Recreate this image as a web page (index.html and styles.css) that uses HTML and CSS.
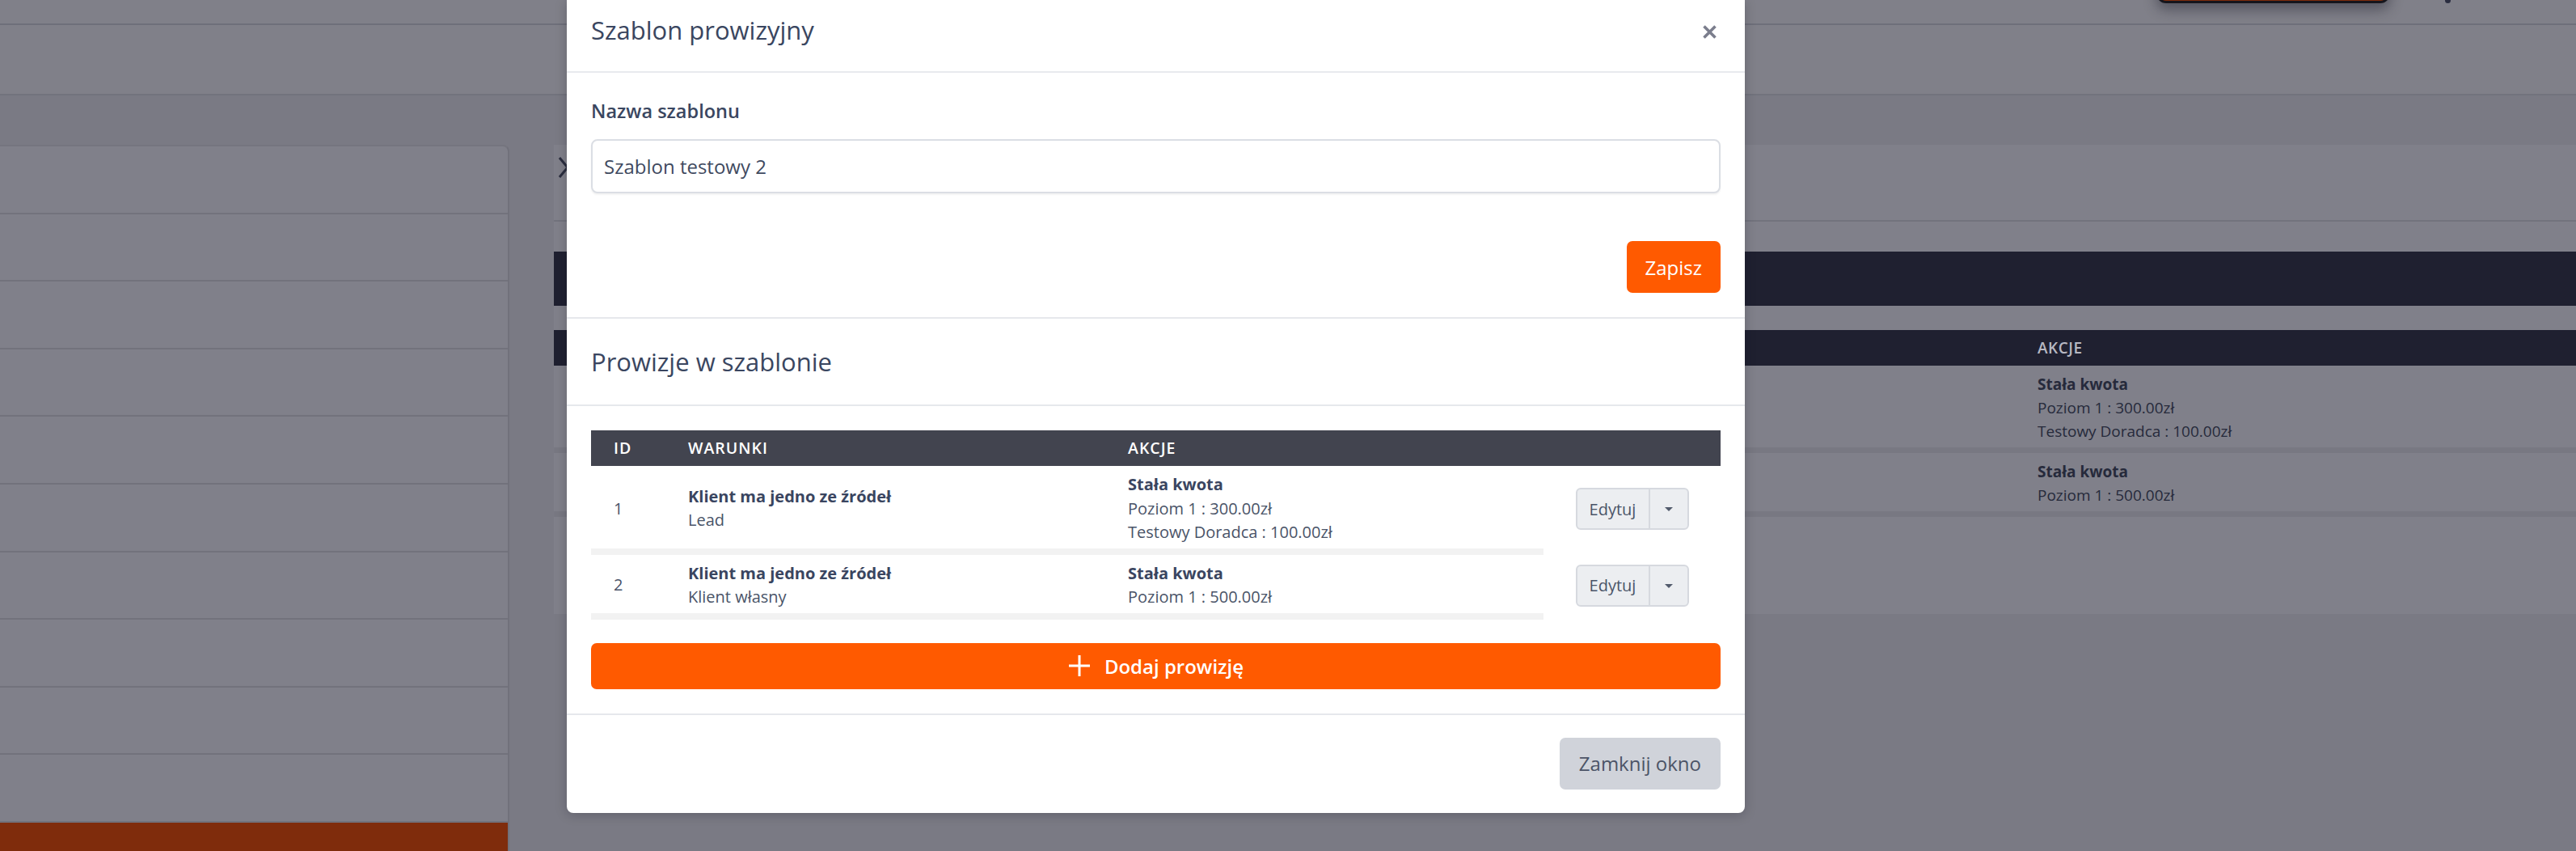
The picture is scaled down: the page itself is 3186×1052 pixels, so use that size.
FILE: index.html
```html
<!DOCTYPE html>
<html lang="pl">
<head>
<meta charset="utf-8">
<title>Szablon prowizyjny</title>
<link rel="stylesheet" href="styles.css">
</head>
<body>
<div class="page">
  <header class="topbar">
    <div class="top-btn"></div>
    <div class="top-dot"></div>
  </header>
  <div class="subbar"></div>
  <div class="content">
    <aside class="side-card">
      <div class="side-row"></div>
      <div class="side-row"></div>
      <div class="side-row"></div>
      <div class="side-row"></div>
      <div class="side-row"></div>
      <div class="side-row"></div>
      <div class="side-row"></div>
      <div class="side-row"></div>
      <div class="side-row"></div>
      <div class="side-row"></div>
      <div class="side-foot"></div>
    </aside>
    <main class="main-card">
      <div class="main-head">
        <svg class="main-x" width="26" height="30" viewBox="0 0 26 30"><path d="M3 3 L23 27 M23 3 L3 27" stroke="#2a2d3e" stroke-width="3" fill="none"/></svg>
      </div>
      <div class="main-bar"></div>
      <table class="bg-table">
        <thead>
          <tr><th class="bg-first"></th><th>Akcje</th></tr>
        </thead>
        <tbody>
          <tr><td></td><td><div class="bg-strong">Stała kwota</div><div>Poziom 1 : 300.00zł</div><div>Testowy Doradca : 100.00zł</div></td></tr>
          <tr><td></td><td><div class="bg-strong">Stała kwota</div><div>Poziom 1 : 500.00zł</div></td></tr>
        </tbody>
      </table>
    </main>
  </div>
</div>

<div class="modal">
  <div class="modal-header">
    <h2 class="modal-title">Szablon prowizyjny</h2>
    <button class="close-btn" type="button" aria-label="Zamknij">
      <svg width="19" height="17" viewBox="0 0 19 17"><path d="M2.5 1.5 L16.5 15.5 M16.5 1.5 L2.5 15.5" stroke="#7b7e8d" stroke-width="3.6" fill="none"/></svg>
    </button>
  </div>
  <div class="modal-body">
    <label class="field-label" for="name">Nazwa szablonu</label>
    <input class="text-input" id="name" type="text" value="Szablon testowy 2">
    <div class="actions-right">
      <button class="btn btn-orange" type="button">Zapisz</button>
    </div>
  </div>
  <section class="section">
    <div class="section-head">
      <h3 class="section-title">Prowizje w szablonie</h3>
    </div>
    <div class="section-body">
      <table class="comm-table">
        <colgroup>
          <col class="w-id"><col class="w-cond"><col class="w-act"><col class="w-btn">
        </colgroup>
        <thead>
          <tr><th>ID</th><th>Warunki</th><th>Akcje</th><th></th></tr>
        </thead>
        <tbody>
          <tr>
            <td class="c-mid">1</td>
            <td class="c-mid"><div class="strong">Klient ma jedno ze źródeł</div><div>Lead</div></td>
            <td><div class="strong">Stała kwota</div><div>Poziom 1 : 300.00zł</div><div>Testowy Doradca : 100.00zł</div></td>
            <td class="c-btn"><div class="split-btn"><span class="split-main">Edytuj</span><span class="split-caret"><span class="caret"></span></span></div></td>
          </tr>
          <tr>
            <td class="c-mid">2</td>
            <td class="c-mid"><div class="strong">Klient ma jedno ze źródeł</div><div>Klient własny</div></td>
            <td><div class="strong">Stała kwota</div><div>Poziom 1 : 500.00zł</div></td>
            <td class="c-btn"><div class="split-btn"><span class="split-main">Edytuj</span><span class="split-caret"><span class="caret"></span></span></div></td>
          </tr>
        </tbody>
      </table>
      <button class="btn btn-orange btn-block" type="button">
        <svg width="28" height="28" viewBox="0 0 28 28"><path d="M14 1 V27 M1 14 H27" stroke="#fff" stroke-width="3" fill="none"/></svg>
        <span>Dodaj prowizję</span>
      </button>
    </div>
  </section>
  <div class="modal-footer">
    <button class="btn btn-gray" type="button">Zamknij okno</button>
  </div>
</div>
</body>
</html>
```

FILE: styles.css
```css
* { box-sizing: border-box; }

html, body {
  margin: 0;
  padding: 0;
}

body {
  width: 3186px;
  height: 1052px;
  overflow: hidden;
  position: relative;
  background: #7a7a84;
  font-family: "Open Sans", "Noto Sans", "DejaVu Sans", sans-serif;
}

/* ---------- dimmed background page ---------- */
.page {
  height: 1052px;
}

.topbar {
  height: 31px;
  background: #808089;
  border-bottom: 2px solid #6e6f7a;
  display: flex;
  justify-content: flex-end;
  align-items: flex-start;
  gap: 68px;
  padding-right: 155px;
}

.top-btn {
  width: 289px;
  height: 40px;
  margin-top: -36px;
  background: #7f2c0c;
  border: 3px solid #15151c;
  border-radius: 12px;
  box-shadow: 0 8px 16px rgba(30, 30, 45, 0.45);
}

.top-dot {
  width: 7px;
  height: 7px;
  margin-top: -3px;
  border-radius: 50%;
  background: #2a2d40;
}

.subbar {
  height: 87px;
  background: #808089;
  border-bottom: 2px solid #72737d;
}

.content {
  display: flex;
  align-items: flex-start;
  padding-top: 61px;
}

.side-card {
  width: 630px;
  height: 873px;
  background: #80808a;
  border-top: 2px solid #75757f;
  border-right: 2px solid #71717b;
  border-top-right-radius: 8px;
  display: flex;
  flex-direction: column;
}

.side-row {
  height: 83.6px;
  flex: none;
  border-bottom: 2px solid #72727c;
}

.side-foot {
  flex: 1;
  background: #7f2c0c;
}

.main-card {
  flex: 1;
  margin-left: 55px;
  height: 580px;
  background: #80808a;
}

.main-head {
  height: 95px;
  border-bottom: 2px solid #72737d;
  padding: 13px 0 0 4px;
}

.main-x { display: block; }

.main-bar {
  margin-top: 37px;
  height: 67px;
  background: #1f2030;
}

.bg-table {
  margin-top: 30px;
  width: 100%;
  border-spacing: 0;
  font-size: 19px;
  line-height: 29px;
  color: #262a3b;
}

.bg-table th {
  height: 44px;
  background: #1f2030;
  color: #b7b8c2;
  font-weight: 600;
  text-transform: uppercase;
  text-align: left;
  padding: 0 28px;
  letter-spacing: 0.5px;
}

.bg-table th.bg-first { width: 1807px; }

.bg-table td {
  padding: 9px 28px 5px;
  vertical-align: top;
  border-bottom: 7px solid #787882;
}

.bg-strong { font-weight: 700; }

/* ---------- modal ---------- */
.modal {
  position: absolute;
  left: 701px;
  top: 0;
  width: 1457px;
  background: #fff;
  border-radius: 0 0 8px 8px;
  box-shadow: 0 2px 14px rgba(20, 20, 30, 0.25);
  color: #3f4a60;
}

.modal-header {
  height: 90px;
  border-bottom: 2px solid #e8eaee;
  display: flex;
  align-items: center;
  justify-content: space-between;
  padding: 0 34px 13px 30px;
}

.modal-title {
  margin: 0;
  font-size: 31px;
  font-weight: 400;
  color: #3a4660;
  line-height: 1.3;
}

.close-btn {
  border: 0;
  background: none;
  padding: 0;
  margin-top: 4px;
  display: flex;
}

.modal-body {
  padding: 31px 30px 30px;
}

.field-label {
  display: block;
  font-size: 23.5px;
  font-weight: 600;
  line-height: 33px;
  color: #3a4660;
  margin-bottom: 18px;
}

.text-input {
  display: block;
  width: 100%;
  height: 67px;
  border: 2px solid #dbdee4;
  border-radius: 8px;
  padding: 0 14px;
  font-family: "Open Sans", "Noto Sans", sans-serif;
  font-size: 24px;
  color: #3f4a60;
  background: #fff;
  box-shadow: 0 2px 2px rgba(0, 0, 0, 0.05);
  outline: none;
}

.actions-right {
  display: flex;
  justify-content: flex-end;
  margin-top: 59px;
}

.btn {
  border: 0;
  border-radius: 7px;
  font-family: "Open Sans", "Noto Sans", sans-serif;
  font-size: 24px;
  height: 64px;
  padding: 0 23px;
  cursor: pointer;
}

.btn-orange {
  background: #ff5a00;
  color: #fff;
}

.btn-gray {
  background: #d0d3da;
  color: #4c5467;
  padding: 0 24px;
}

.section {
  border-top: 2px solid #e6e8ec;
}

.section-head {
  height: 108px;
  border-bottom: 2px solid #e6e8ec;
  display: flex;
  align-items: center;
  padding: 0 30px;
}

.section-title {
  margin: 0;
  font-size: 31px;
  font-weight: 400;
  line-height: 1.3;
  color: #3a4660;
}

.section-body {
  padding: 30px 30px 30px;
}

.comm-table {
  width: 100%;
  table-layout: fixed;
  border-spacing: 0;
  font-size: 20px;
  line-height: 29.5px;
  color: #4a5468;
}

.w-id { width: 92px; }
.w-cond { width: 544px; }
.w-act { width: 542px; }
.w-btn { width: 219px; }

.comm-table th {
  height: 44px;
  background: #42444f;
  color: #fff;
  font-size: 19.5px;
  font-weight: 600;
  letter-spacing: 1px;
  text-transform: uppercase;
  text-align: left;
  padding: 0 28px;
}

.comm-table td {
  padding: 8px 28px 5px;
  vertical-align: top;
  border-bottom: 8px solid #f2f2f2;
}

.comm-table td.c-mid { vertical-align: middle; }

.comm-table td.c-btn {
  border-bottom: 0;
  padding: 0 0 3px;
  vertical-align: middle;
}

.strong {
  font-weight: 700;
  color: #3a4560;
}

.split-btn {
  width: 140px;
  height: 52px;
  margin: 0 auto;
  display: flex;
  border: 2px solid #d6d9df;
  border-radius: 6px;
  background: #eceef1;
  overflow: hidden;
}

.split-main {
  width: 90px;
  display: flex;
  align-items: center;
  justify-content: center;
  border-right: 2px solid #d6d9df;
  color: #4a5468;
  font-size: 20px;
}

.split-caret {
  flex: 1;
  display: flex;
  align-items: center;
  justify-content: center;
}

.caret {
  width: 0;
  height: 0;
  border-left: 5px solid transparent;
  border-right: 5px solid transparent;
  border-top: 5px solid #525b6c;
}

.btn-block {
  width: 100%;
  height: 57px;
  margin-top: 29px;
  display: flex;
  align-items: center;
  justify-content: center;
  gap: 17px;
  font-weight: 600;
  border-radius: 7px;
}

.btn-block svg { display: block; }

.modal-footer {
  border-top: 2px solid #e6e8ec;
  padding: 28px 30px 29px;
  display: flex;
  justify-content: flex-end;
}
```
